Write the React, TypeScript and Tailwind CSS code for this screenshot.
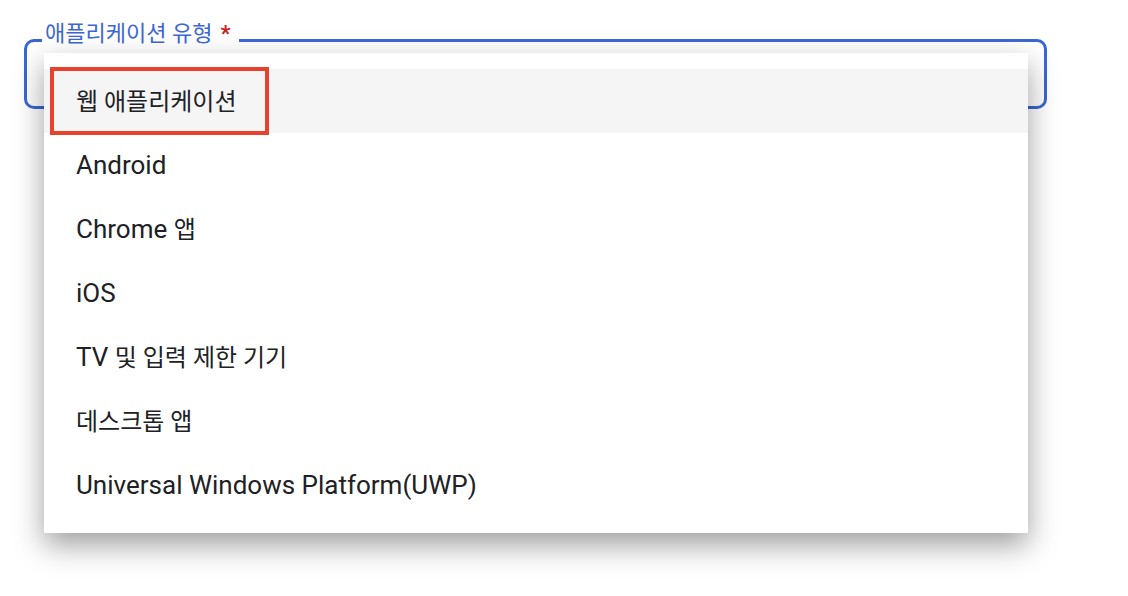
import React from 'react';

const App: React.FC = () => {
  const options = [
    "웹 애플리케이션",
    "Android",
    "Chrome 앱",
    "iOS",
    "TV 및 입력 제한 기기",
    "데스크톱 앱",
    "Universal Windows Platform(UWP)"
  ];

  // Hangul runs are set a touch smaller than the Latin runs (matches the reference's mixed fonts)
  const renderLabel = (text: string) =>
    text.split(/([\uac00-\ud7a3][\uac00-\ud7a3 ]*)/).filter(Boolean).map((part, i) =>
      /[\uac00-\ud7a3]/.test(part) ? (
        <span key={i} className="text-[24px]">{part}</span>
      ) : (
        <span key={i}>{part}</span>
      )
    );

  return (
    <div
      className="relative w-full h-[596px] bg-white overflow-hidden pl-[24px] pt-[39px]"
      style={{ fontFamily: 'Roboto, "Noto Sans CJK KR", sans-serif' }}
    >
      {/* Outlined select field (focused) */}
      <div className="relative w-[1023px] h-[70px] border-[3px] border-[#3c67d3] rounded-[10px]">
        <span className="absolute left-[15px] top-[-21px] flex items-center bg-white pl-[3px] pr-[9px] text-[22px] leading-[26px] text-[#3c67d3]">
          애플리케이션 유형
          <span className="ml-[8px] text-[#c5221f] font-bold">*</span>
        </span>
      </div>

      {/* Open dropdown menu */}
      <div className="absolute left-[44px] top-[53px] w-[984px] py-[16px] bg-white shadow-[0_12px_28px_rgba(0,0,0,0.38)]">
        <ul className="flex flex-col">
          {options.map((item, i) => (
            <li
              key={i}
              className={
                i === 0
                  ? "relative h-[64px] flex items-center pl-[32px] text-[26px] text-[#202124] bg-[#f5f5f5]"
                  : "relative h-[64px] flex items-center pl-[32px] text-[26px] text-[#202124]"
              }
            >
              <span className="whitespace-pre">{renderLabel(item)}</span>
              {i === 0 && (
                <span className="absolute left-[6px] top-[-2px] w-[219px] h-[68px] border-[4px] border-[#e8412c]" />
              )}
            </li>
          ))}
        </ul>
      </div>
    </div>
  );
};

export default App;
